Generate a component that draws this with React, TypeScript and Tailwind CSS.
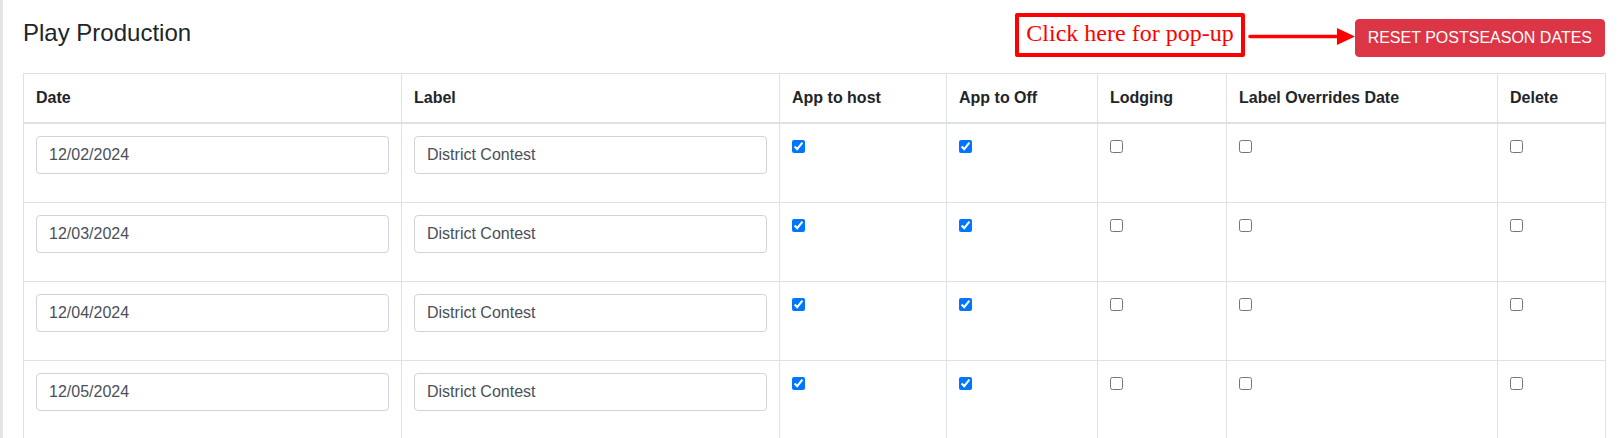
import React from "react"

const rows = [
  { date: "12/02/2024", label: "District Contest" },
  { date: "12/03/2024", label: "District Contest" },
  { date: "12/04/2024", label: "District Contest" },
  { date: "12/05/2024", label: "District Contest" },
]

const cols = [
  { name: "Date", w: "w-[378px]" },
  { name: "Label", w: "w-[378px]" },
  { name: "App to host", w: "w-[167px]" },
  { name: "App to Off", w: "w-[151px]" },
  { name: "Lodging", w: "w-[129px]" },
  { name: "Label Overrides Date", w: "w-[271px]" },
  { name: "Delete", w: "w-[108px]" },
]

function Arrow() {
  return (
    <svg width="107" height="17" viewBox="0 0 107 17" className="mb-[12px] ml-[3px] block">
      <line x1="2" y1="8.5" x2="92" y2="8.5" stroke="#ff0000" strokeWidth="3.5" strokeLinecap="round" />
      <polygon points="89,0 107,8.5 89,17" fill="#ff0000" />
    </svg>
  )
}

function Check({ checked }: { checked?: boolean }) {
  return <input type="checkbox" defaultChecked={checked} className="block m-0 mt-[4px] w-[13px] h-[13px]" />
}

export default function App() {
  return (
    <div className="h-screen overflow-hidden bg-white border-l-[3px] border-[#e2e4e7] pl-[20px] pr-[17px] font-['Liberation_Sans',Arial,sans-serif] text-[#212529]">
      {/* 헤더 */}
      <div className="flex justify-between items-start h-[57px] mb-[16px]">
        <h4 className="pt-[19px] text-[24px] leading-[28.8px] font-medium">Play Production</h4>
        <div className="flex items-end pt-[13px]">
          <div className="h-[44px] border-[4px] border-[#ff0000] rounded-[2px] px-[7px] pb-[3px] text-[24px] leading-[33px] text-[#ff0000] font-['Liberation_Serif','Times_New_Roman',serif]">
            Click here for pop-up
          </div>
          <Arrow />
          <button className="h-[38px] px-[12px] rounded-[4px] bg-[#dc3545] text-white text-[16px] leading-6 border border-[#dc3545]">
            RESET POSTSEASON DATES
          </button>
        </div>
      </div>

      {/* 테이블 */}
      <table className="w-[1582px] table-fixed border-collapse">
        <colgroup>
          {cols.map((c) => (
            <col key={c.name} className={c.w} />
          ))}
        </colgroup>
        <thead>
          <tr>
            {cols.map((c) => (
              <th
                key={c.name}
                className="border border-[#dee2e6] border-b-2 p-[12px] text-left align-bottom text-[16px] leading-6 font-bold"
              >
                {c.name}
              </th>
            ))}
          </tr>
        </thead>
        <tbody>
          {rows.map((r) => (
            <tr key={r.date}>
              <td className="border border-[#dee2e6] p-[12px] align-top">
                <input
                  defaultValue={r.date}
                  className="block w-full h-[38px] mb-[16px] px-[12px] py-[6px] text-[16px] leading-6 text-[#495057] border border-[#ced4da] rounded-[4px] bg-white"
                />
              </td>
              <td className="border border-[#dee2e6] p-[12px] align-top">
                <input
                  defaultValue={r.label}
                  className="block w-full h-[38px] mb-[16px] px-[12px] py-[6px] text-[16px] leading-6 text-[#495057] border border-[#ced4da] rounded-[4px] bg-white"
                />
              </td>
              <td className="border border-[#dee2e6] p-[12px] align-top">
                <Check checked />
              </td>
              <td className="border border-[#dee2e6] p-[12px] align-top">
                <Check checked />
              </td>
              <td className="border border-[#dee2e6] p-[12px] align-top">
                <Check />
              </td>
              <td className="border border-[#dee2e6] p-[12px] align-top">
                <Check />
              </td>
              <td className="border border-[#dee2e6] p-[12px] align-top">
                <Check />
              </td>
            </tr>
          ))}
        </tbody>
      </table>
    </div>
  )
}
